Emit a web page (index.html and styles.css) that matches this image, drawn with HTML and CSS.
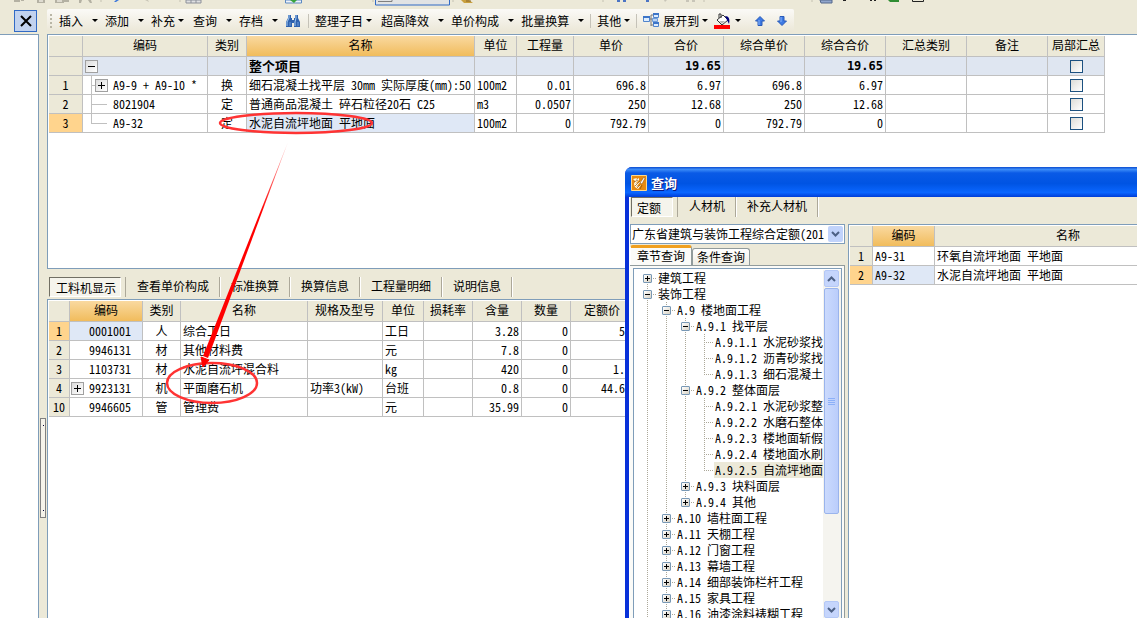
FILE: index.html
```html
<!DOCTYPE html>
<html lang="zh-CN">
<head>
<meta charset="utf-8">
<title>查询</title>
<link rel="stylesheet" href="styles.css">
</head>
<body>
<div class="topbar">
  <svg class="top-icons" width="960" height="9" viewBox="0 0 960 9" aria-hidden="true">
    <g fill="#b4b1a3"><path d="M14 0h6v2h-6zM21 0h3v1h-3z"/><path d="M37 0h8v3h-8zM55 0h9v3h-9zM60 0h9v2h-9z"/><path d="M79 0h3l-1 3h-2zM88 0h3l1 3h-2z"/></g>
    <g fill="#dedbd0"><path d="M39 0h4v2h-4zM57 0h5v2h-5z"/></g>
    <path d="M114 2l2-2h3l-3 2z" fill="#3c78dc"/><path d="M145 0h3l1 2z" fill="#c8c5b6"/>
    <path d="M101 0v2M180 0v2M373 0v2M453 0v2M603 0v2M704 0v2M812 0v2" stroke="#c4c1b2"/>
    <path d="M186 0v3h15v-3zM191 0v3M196 0v3" fill="#dfe0e2" stroke="#8c9099"/>
    <path d="M285.500 0v3h16v-3z" fill="#eef3fa" stroke="#5c8ac2"/><path d="M290 0h7l-3 3z" fill="#38a33c"/>
    <path d="M375.500 -1v6h74v-6z" fill="#e1e3e4" stroke="#316ac5"/><path d="M378 1.500h14v-3" fill="none" stroke="#7f7f7f"/>
    <path d="M461 0h8l4 3h-9z" fill="#c9a03e"/><path d="M466 1h5" stroke="#86652c"/>
    <path d="M617 0h3v2h-3zM623 0h3v2h-3zM646 0h3v2h-3z" fill="#4b74c4"/><path d="M664 0h3l-2 2zM686 0h3v2h-3zM692 0h3v2h-3z" fill="#c8c5b8"/>
    <path d="M820 0h12v3h-11z" fill="#91a6cc" stroke="#54688c"/><path d="M843 0h3v1h-3zM870 0h2v1h-2zM874 0h2v1h-2z" fill="#222"/>
    <path d="M888 0h11v2h-9z" fill="#2f8d32"/><path d="M912.500 0v1.500h11v-2" fill="none" stroke="#222"/>
  </svg>
</div>
<div class="workspace">
  <aside class="side">
    <div class="side-head"><button class="close" aria-label="关闭"><svg width="14" height="14" viewBox="0 0 14 14"><path d="M2 2l10 10M12 2L2 12" stroke="#000" stroke-width="2"/></svg></button></div>
    <div class="side-body"></div>
  </aside>
  <div class="gutter"><div class="grip"><i></i><i></i></div></div>
  <main class="main">
    <div class="toolbar-row">
      <div class="toolbar">
        <span class="handle"></span>
        <button class="menu wide">插入</button>
        <button class="menu wide">添加</button>
        <button class="menu">补充</button>
        <button class="menu wide">查询</button>
        <button class="menu wide">存档</button>
        <button class="icon" aria-label="查找"><svg width="16" height="14" viewBox="0 0 16 14"><path d="M3 1h3v3h1v2h2V4h1V1h3v3l2 4v5H9V9H7v4H1V8l2-4z" fill="#2f62ae"/><path d="M4 1v3L2 8v4M11 1v3l-1 4v4" stroke="#a9cdf2" fill="none"/><path d="M5 8v4M13 8v4" stroke="#6c9bd8"/></svg></button>
        <span class="sep"></span>
        <button class="menu">整理子目</button>
        <button class="menu wide">超高降效</button>
        <button class="menu wide">单价构成</button>
        <button class="menu wide end">批量换算</button>
        <span class="sep"></span>
        <button class="menu end">其他</button>
        <span class="sep"></span>
        <button class="menu end"><svg width="17" height="15" viewBox="0 0 17 15"><path d="M5 6h5M8 2v11M8 2h3M8 12h3" stroke="#777" fill="none"/><path d="M.5 3.500h6v5h-6zM10.500 .5h5v4h-5zM10.500 9.500h5v4h-5z" fill="#dcecff" stroke="#5084cc"/><path d="M0 3h7v2H0zM10 0h6v2h-6zM10 9h6v2h-6z" fill="#3d75c8"/><path d="M9.500 5.500h5v3h-5z" fill="#b9d3f4" stroke="#6d9bd9"/></svg>展开到</button>
        <button class="menu" aria-label="填充颜色"><svg width="18" height="16" viewBox="0 0 18 16"><path d="M7 5V1h-2v4M3 7l6-5 5 5-6 5z" fill="#fff" stroke="#333"/><path d="M5 8h6l-3 3z" fill="#b8b8b8"/><path d="M11 3c4 0 5 3 4 8l-2-4z" fill="#00007b"/><path d="M0 12h16v4H0z" fill="#f00"/></svg></button>
        <button class="icon small" aria-label="上移"><svg width="10" height="10" viewBox="0 0 10 10"><path d="M5 .5L9.500 5H7v4.500H3V5H.5z" fill="#3d79e4" stroke="#285ab8"/><path d="M4 4v5" stroke="#8ab8fa"/></svg></button>
        <button class="icon small" aria-label="下移"><svg width="10" height="10" viewBox="0 0 10 10"><path d="M5 9.500L9.500 5H7V.5H3V5H.5z" fill="#3d79e4" stroke="#285ab8"/><path d="M4 1v5" stroke="#8ab8fa"/></svg></button>
      </div>
    </div>
    <section class="pane upper">
      <table class="grid bill">
        <colgroup><col class="w34"><col class="w125"><col class="w39"><col class="w228"><col class="w42"><col class="w57"><col class="w75"><col class="w75"><col class="w81"><col class="w81"><col class="w81"><col class="w81"><col class="w57"></colgroup>
        <thead><tr><th></th><th>编码</th><th>类别</th><th class="on">名称</th><th>单位</th><th>工程量</th><th>单价</th><th>合价</th><th>综合单价</th><th>综合合价</th><th>汇总类别</th><th>备注</th><th>局部汇总</th></tr></thead>
        <tbody>
          <tr class="total"><td class="no"></td><td><div class="code root"><button class="box minus" aria-label="折叠"></button></div></td><td></td><td>整个项目</td><td></td><td></td><td></td><td class="r">19.65</td><td></td><td class="r">19.65</td><td></td><td></td><td class="c"><input type="checkbox" aria-label="局部汇总"></td></tr>
          <tr><td class="no">1</td><td><div class="code"><span class="guide has-box"><button class="box plus" aria-label="展开"></button></span>A9-9 + A9-10 *</div></td><td class="c">换</td><td>细石混凝土找平层 30mm 实际厚度(mm):50</td><td>100m2</td><td class="r">0.01</td><td class="r">696.8</td><td class="r">6.97</td><td class="r">696.8</td><td class="r">6.97</td><td></td><td></td><td class="c"><input type="checkbox" aria-label="局部汇总 1"></td></tr>
          <tr><td class="no">2</td><td><div class="code"><span class="guide"></span>8021904</div></td><td class="c">定</td><td>普通商品混凝土 碎石粒径20石 C25</td><td>m3</td><td class="r">0.0507</td><td class="r">250</td><td class="r">12.68</td><td class="r">250</td><td class="r">12.68</td><td></td><td></td><td class="c"><input type="checkbox" aria-label="局部汇总 2"></td></tr>
          <tr><td class="no on">3</td><td><div class="code"><span class="guide end"></span>A9-32</div></td><td class="c">定</td><td class="sel">水泥自流坪地面 平地面</td><td>100m2</td><td class="r">0</td><td class="r">792.79</td><td class="r">0</td><td class="r">792.79</td><td class="r">0</td><td></td><td></td><td class="c"><input type="checkbox" aria-label="局部汇总 3"></td></tr>
        </tbody>
      </table>
    </section>
    <nav class="tabs">
      <button class="tab active">工料机显示</button><button class="tab">查看单价构成</button><button class="tab">标准换算</button><button class="tab">换算信息</button><button class="tab">工程量明细</button><button class="tab">说明信息</button>
    </nav>
    <section class="pane lower">
      <table class="grid parts">
        <colgroup><col class="w21"><col class="w73"><col class="w38"><col class="w127"><col class="w75"><col class="w41"><col class="w49"><col class="w49"><col class="w49"><col class="w63"></colgroup>
        <thead><tr><th></th><th class="on">编码</th><th>类别</th><th>名称</th><th>规格及型号</th><th>单位</th><th>损耗率</th><th>含量</th><th>数量</th><th>定额价</th></tr></thead>
        <tbody>
          <tr><td class="no on">1</td><td class="sel"><div class="num">0001001</div></td><td class="c">人</td><td>综合工日</td><td></td><td>工日</td><td></td><td class="r">3.28</td><td class="r">0</td><td class="r">51</td></tr>
          <tr><td class="no">2</td><td><div class="num">9946131</div></td><td class="c">材</td><td>其他材料费</td><td></td><td>元</td><td></td><td class="r">7.8</td><td class="r">0</td><td class="r">1</td></tr>
          <tr><td class="no">3</td><td><div class="num">1103731</div></td><td class="c">材</td><td>水泥自流坪混合料</td><td></td><td>kg</td><td></td><td class="r">420</td><td class="r">0</td><td class="r">1.5</td></tr>
          <tr><td class="no">4</td><td><div class="num"><button class="box plus" aria-label="展开"></button>9923131</div></td><td class="c">机</td><td>平面磨石机</td><td>功率3(kW)</td><td>台班</td><td></td><td class="r">0.8</td><td class="r">0</td><td class="r">44.62</td></tr>
          <tr><td class="no">10</td><td><div class="num">9946605</div></td><td class="c">管</td><td>管理费</td><td></td><td>元</td><td></td><td class="r">35.99</td><td class="r">0</td><td class="r">1</td></tr>
        </tbody>
      </table>
    </section>
  </main>
</div>

<svg class="marks" width="400" height="420" viewBox="0 0 400 420" aria-hidden="true">
  <defs><linearGradient id="fade" gradientUnits="userSpaceOnUse" x1="288" y1="142" x2="262" y2="212"><stop offset="0" stop-color="#f00" stop-opacity=".25"/><stop offset="1" stop-color="#f00"/></linearGradient></defs>
  <ellipse cx="296" cy="123" rx="76" ry="10" fill="none" stroke="#f33" stroke-width="2.500"/>
  <ellipse cx="212" cy="383" rx="45" ry="20" fill="none" stroke="#f33" stroke-width="2.500"/>
  <path d="M288 142L208 358L203 356Z" fill="url(#fade)"/>
  <path d="M201 357L209 360L203 367Z" fill="#f00" stroke="#f00"/>
</svg>

<div class="dialog" role="dialog" aria-label="查询">
  <div class="title"><svg width="16" height="16" viewBox="0 0 16 16"><path d="M.5.5h15v15H.5z" fill="#e88a10" stroke="#ffd88a"/><path d="M2 4l4-1-1 2 3-2v2L4 9l6-3-5 6 5-2-3 4-3-2-1-3 1-3z" fill="#fffbe8"/><path d="M13 2L9 8l2 1 3-6z" fill="#fff" stroke="#8a4a00" stroke-width=".5"/><path d="M3 7l4-2M4 11l5-5M9 10l-3 3M11 10l-2 4" stroke="#8a4a00" stroke-width=".7"/></svg><span>查询</span></div>
  <div class="dialog-body">
    <nav class="tabs dtabs"><button class="tab active">定额</button><button class="tab">人材机</button><button class="tab">补充人材机</button></nav>
    <div class="split">
      <div class="left">
        <div class="combo"><select aria-label="定额库"><option>广东省建筑与装饰工程综合定额(201</option></select><span class="arrow"><svg width="9" height="6" viewBox="0 0 9 6"><path d="M1 1l3.500 3.500L8 1" fill="none" stroke="#4d6185" stroke-width="2"/></svg></span></div>
        <div class="xptabs"><button class="xp active">章节查询</button><button class="xp">条件查询</button></div>
        <div class="page">
          <div class="treebox">
            <div class="tree">
              <div class="row"><i class="n first"><button class="pm p" aria-label="展开"></button></i><span>建筑工程</span></div>
              <div class="row"><i class="n"><button class="pm" aria-label="折叠"></button></i><span>装饰工程</span></div>
              <div class="row"><i class="v"></i><i class="n"><button class="pm" aria-label="折叠"></button></i><span>A.9 楼地面工程</span></div>
              <div class="row"><i class="v"></i><i class="v"></i><i class="n"><button class="pm" aria-label="折叠"></button></i><span>A.9.1 找平层</span></div>
              <div class="row"><i class="v"></i><i class="v"></i><i class="v"></i><i class="n"></i><span>A.9.1.1 水泥砂浆找</span></div>
              <div class="row"><i class="v"></i><i class="v"></i><i class="v"></i><i class="n"></i><span>A.9.1.2 沥青砂浆找</span></div>
              <div class="row"><i class="v"></i><i class="v"></i><i class="v"></i><i class="n last"></i><span>A.9.1.3 细石混凝土</span></div>
              <div class="row"><i class="v"></i><i class="v"></i><i class="n"><button class="pm" aria-label="折叠"></button></i><span>A.9.2 整体面层</span></div>
              <div class="row"><i class="v"></i><i class="v"></i><i class="v"></i><i class="n"></i><span>A.9.2.1 水泥砂浆整</span></div>
              <div class="row"><i class="v"></i><i class="v"></i><i class="v"></i><i class="n"></i><span>A.9.2.2 水磨石整体</span></div>
              <div class="row"><i class="v"></i><i class="v"></i><i class="v"></i><i class="n"></i><span>A.9.2.3 楼地面斩假</span></div>
              <div class="row"><i class="v"></i><i class="v"></i><i class="v"></i><i class="n"></i><span>A.9.2.4 楼地面水刷</span></div>
              <div class="row"><i class="v"></i><i class="v"></i><i class="v"></i><i class="n last"></i><span class="picked">A.9.2.5 自流坪地面</span></div>
              <div class="row"><i class="v"></i><i class="v"></i><i class="n"><button class="pm p" aria-label="展开"></button></i><span>A.9.3 块料面层</span></div>
              <div class="row"><i class="v"></i><i class="v"></i><i class="n last"><button class="pm p" aria-label="展开"></button></i><span>A.9.4 其他</span></div>
              <div class="row"><i class="v"></i><i class="n"><button class="pm p" aria-label="展开"></button></i><span>A.10 墙柱面工程</span></div>
              <div class="row"><i class="v"></i><i class="n"><button class="pm p" aria-label="展开"></button></i><span>A.11 天棚工程</span></div>
              <div class="row"><i class="v"></i><i class="n"><button class="pm p" aria-label="展开"></button></i><span>A.12 门窗工程</span></div>
              <div class="row"><i class="v"></i><i class="n"><button class="pm p" aria-label="展开"></button></i><span>A.13 幕墙工程</span></div>
              <div class="row"><i class="v"></i><i class="n"><button class="pm p" aria-label="展开"></button></i><span>A.14 细部装饰栏杆工程</span></div>
              <div class="row"><i class="v"></i><i class="n"><button class="pm p" aria-label="展开"></button></i><span>A.15 家具工程</span></div>
              <div class="row"><i class="v"></i><i class="n"><button class="pm p" aria-label="展开"></button></i><span>A.16 油漆涂料裱糊工程</span></div>
            </div>
            <div class="scroll">
              <button class="sbtn" aria-label="向上滚动"><svg width="9" height="6" viewBox="0 0 9 6"><path d="M1 5l3.500-3.500L8 5" fill="none" stroke="#4d6185" stroke-width="2"/></svg></button>
              <div class="thumb"><i></i><i></i><i></i><i></i></div>
              <button class="sbtn bottom" aria-label="向下滚动"><svg width="9" height="6" viewBox="0 0 9 6"><path d="M1 1l3.500 3.500L8 1" fill="none" stroke="#4d6185" stroke-width="2"/></svg></button>
            </div>
          </div>
        </div>
      </div>
      <div class="pane right">
        <table class="grid result">
          <colgroup><col class="w23"><col class="w62"><col class="w267"></colgroup>
          <thead><tr><th></th><th class="on">编码</th><th>名称</th></tr></thead>
          <tbody>
            <tr><td class="no">1</td><td>A9-31</td><td>环氧自流坪地面 平地面</td></tr>
            <tr><td class="no on">2</td><td class="sel">A9-32</td><td>水泥自流坪地面 平地面</td></tr>
          </tbody>
        </table>
      </div>
    </div>
  </div>
</div>
</body>
</html>
```
FILE: styles.css
```css
* { box-sizing: border-box; }
html, body { height: 100%; }
body {
  margin: 0; display: flex; flex-direction: column; overflow: hidden; position: relative;
  background: #ece9d8; color: #000;
  font: 12px/16px "Noto Sans Mono CJK SC", "Noto Sans CJK SC", monospace;
}
button, select, input { font: inherit; color: inherit; margin: 0; padding: 0; }
button { border: 0; background: none; white-space: nowrap; }
svg { display: block; flex: none; }
i { font-style: normal; }

.topbar { height: 9px; flex: none; overflow: hidden; }
.workspace { flex: 1; display: flex; min-height: 0; }

.side { width: 39px; flex: none; display: flex; flex-direction: column; }
.side-head { height: 25px; flex: none; display: flex; justify-content: flex-end; padding: 1px 2px 0 0; }
.close { width: 23px; height: 22px; border: 1px solid #316ac5; background: #c1d2ee; display: flex; align-items: center; justify-content: center; }
.side-body { flex: 1; background: #fff; border-top: 1px solid #7f9db9; border-right: 1px solid #7f9db9; }

.gutter { width: 8px; flex: none; display: flex; justify-content: center; align-items: flex-start; padding-top: 409px; }
.grip { width: 6px; height: 100px; border: 1px solid #808080; background: #f5f3ea; display: flex; flex-direction: column; justify-content: space-between; align-items: center; padding: 6px 0; }
.grip i { width: 1px; height: 1px; background: #003; }

.main { flex: 1; min-width: 0; display: flex; flex-direction: column; }
.toolbar-row { height: 25px; flex: none; display: flex; }
.toolbar { display: flex; align-items: center; height: 23px; padding-left: 3px; background: linear-gradient(#fbfaf7, #ebe7d7); border-radius: 2px; }
.handle { width: 2px; height: 14px; margin-right: 7px; background: repeating-linear-gradient(#b9b6a6 0 2px, transparent 2px 4px); }
.menu { display: flex; align-items: center; gap: 3px; margin-right: 9px; }
.menu::after { content: ""; border: 3px solid transparent; border-top-color: #000; border-bottom: 0; }
.menu.wide { margin-right: 7px; }
.menu.wide::after { margin-left: 6px; }
.menu.end { margin-right: 6px; }
.icon { margin-right: 7px; }
.icon.small { margin: 0 7px 0 5px; }
.sep { width: 1px; height: 14px; background: #c5c2b8; margin-right: 6px; }

.pane { background: #fff; border: 1px solid #7f9db9; border-right: 0; padding: 1px 0 0 1px; overflow: hidden; }
.upper { height: 235px; flex: none; }
.lower { flex: 1; border-bottom: 0; }

.grid { border-collapse: separate; border-spacing: 0; table-layout: fixed; width: 0; }
.grid th, .grid td { border-right: 1px solid #c0c0c0; border-bottom: 1px solid #c0c0c0; padding: 0 2px; height: 19px; line-height: 18px; white-space: nowrap; overflow: hidden; text-align: left; font-weight: normal; vertical-align: top; }
.grid th { height: 21px; background: #ece9d8; text-align: center; }
.grid th.on { background: linear-gradient(#f9d9a0, #f1bc5c); }
.grid td.no { background: #ece9d8; text-align: center; padding: 0; }
.grid td.no.on { background: #ffd48d; }
.grid td.sel { background: #dfe8f6; }
.grid td.c { text-align: center; padding: 0; }
.grid td.r { text-align: right; }
.grid .total td { background: #dfe6f1; font-weight: bold; font-size: 13px; }
.grid .total td.r { font-size: 12px; font-family: "DejaVu Sans Mono", monospace; }
.grid .total td.no { background: #ece9d8; }
.w34 { width: 34px; } .w125 { width: 125px; } .w39 { width: 39px; } .w228 { width: 228px; }
.w42 { width: 42px; } .w57 { width: 57px; } .w75 { width: 75px; } .w81 { width: 81px; }
.w21 { width: 21px; } .w73 { width: 73px; } .w38 { width: 38px; } .w127 { width: 127px; }
.w41 { width: 41px; } .w49 { width: 49px; } .w63 { width: 63px; }
.w23 { width: 23px; } .w62 { width: 62px; } .w267 { width: 267px; }

.code { display: flex; align-items: center; height: 18px; padding-left: 6px; }
.code.root { padding-left: 0; }
.guide { width: 18px; height: 18px; margin-right: 4px; flex: none; display: flex; align-items: center;
  background: linear-gradient(#c0c0c0, #c0c0c0) 0 0 / 1px 18px no-repeat, linear-gradient(#c0c0c0, #c0c0c0) 0 9px / 16px 1px no-repeat; }
.guide.end { background: linear-gradient(#c0c0c0, #c0c0c0) 0 0 / 1px 9px no-repeat, linear-gradient(#c0c0c0, #c0c0c0) 0 9px / 16px 1px no-repeat; }
.guide.has-box { padding-left: 4px; }
.box { width: 13px; height: 13px; flex: none; border: 1px solid #a0a0a0; background: linear-gradient(#000, #000) center / 7px 1px no-repeat, linear-gradient(135deg, #dcdcdc, #fff); }
.box.plus { background: linear-gradient(#000, #000) center / 7px 1px no-repeat, linear-gradient(#000, #000) center / 1px 7px no-repeat, linear-gradient(135deg, #dcdcdc, #fff); }
.num { display: flex; align-items: center; justify-content: flex-end; gap: 5px; height: 18px; padding-right: 9px; }

input[type="checkbox"] { appearance: none; display: block; width: 13px; height: 13px; margin: 3px auto 0; border: 1px solid #1c5180; background: linear-gradient(135deg, #dcdcd7, #fff); }

.tabs { height: 30px; flex: none; display: flex; align-items: flex-start; padding: 8px 0 0 2px; }
.tab { height: 20px; padding: 0 10px 2px 11px; border-right: 1px solid #aca899; box-shadow: 1px 0 #fff; }
.tab.active { padding: 2px 4px 0 6px; border: 1px solid #fff; border-top-color: #716f64; border-left-color: #716f64; margin-right: 5px; background: #f5f4ec; box-shadow: 4px 0 #ece9d8, 5px 0 #aca899; }

.marks { position: absolute; left: 0; top: 0; }

.dialog { position: absolute; left: 625px; right: 0; top: 167px; bottom: 0; display: flex; flex-direction: column; border-radius: 7px 0 0 0; overflow: hidden; background: #0831d9; }
.title { height: 30px; flex: none; display: flex; align-items: center; gap: 4px; padding: 2px 0 0 6px; color: #fff; font-weight: bold; font-size: 13px; text-shadow: 1px 1px #0a1883;
  background: linear-gradient(#0a4bd0, #3c8cf8 8%, #0a5ae6 20%, #0054e3 55%, #0a66ff 85%, #003dd7); }
.dialog-body { flex: 1; min-height: 0; display: flex; flex-direction: column; margin-left: 4px; background: #ece9d8; border-left: 1px solid #fff; }
.dtabs { height: 27px; padding: 0 0 0 1px; }
.dtabs .tab.active { padding: 2px 11px 0 5px; }
.split { flex: 1; min-height: 0; display: flex; gap: 3px; }
.left { width: 215px; flex: none; display: flex; flex-direction: column; }
.combo { height: 20px; flex: none; position: relative; }
.combo select { appearance: none; width: 100%; height: 20px; border: 1px solid #7f9db9; border-radius: 0; background: #fff; padding: 0 17px 0 1px; display: block; }
.arrow { position: absolute; right: 2px; top: 2px; width: 15px; height: 16px; border-radius: 2px; background: #c1d3fb; display: flex; align-items: center; justify-content: center; pointer-events: none; }
.xptabs { height: 20px; margin-top: 1px; flex: none; display: flex; align-items: flex-end; }
.xp { height: 17px; padding: 0 4px; border: 1px solid #919b9c; border-bottom: 0; border-radius: 3px 3px 0 0; background: linear-gradient(#fff, #f0eee4); }
.xp.active { height: 20px; padding: 0 6px 2px; border-top: 3px solid #f0a020; border-left-color: #fff; background: #fbfbf8; }
.page { flex: 1; min-height: 0; display: flex; border: solid #919b9c; border-width: 1px 1px 0 0; background: #fbfbf8; padding: 2px 2px 0 3px; }
.treebox { flex: 1; min-width: 0; display: flex; border: solid #7f9db9; border-width: 1px 1px 0 1px; background: #fff; padding-top: 1px; }
.tree { flex: 1; min-width: 0; overflow: hidden; padding-left: 4px; }
.row { display: flex; height: 16px; line-height: 16px; white-space: nowrap; }
.row > i { width: 19px; height: 16px; flex: none; display: flex; align-items: center; justify-content: center; }
.row > .v { background: repeating-linear-gradient(#aca899 0 1px, transparent 1px 2px) 9px 0 / 1px 16px no-repeat; }
.row > .n { background: repeating-linear-gradient(#aca899 0 1px, transparent 1px 2px) 9px 0 / 1px 16px no-repeat, repeating-linear-gradient(90deg, #aca899 0 1px, transparent 1px 2px) 9px 8px / 10px 1px no-repeat; }
.row > .last { background: repeating-linear-gradient(#aca899 0 1px, transparent 1px 2px) 9px 0 / 1px 8px no-repeat, repeating-linear-gradient(90deg, #aca899 0 1px, transparent 1px 2px) 9px 8px / 10px 1px no-repeat; }
.row > .first { background: repeating-linear-gradient(#aca899 0 1px, transparent 1px 2px) 9px 8px / 1px 8px no-repeat, repeating-linear-gradient(90deg, #aca899 0 1px, transparent 1px 2px) 9px 8px / 10px 1px no-repeat; }
.row > span { padding-left: 1px; }
.row > .picked { flex: 1; background: #ece9d8; }
.pm { width: 9px; height: 9px; border: 1px solid #7898b5; border-radius: 1px; background: linear-gradient(#000, #000) center / 5px 1px no-repeat, linear-gradient(135deg, #fff, #d8d2c4); }
.pm.p { background: linear-gradient(#000, #000) center / 5px 1px no-repeat, linear-gradient(#000, #000) center / 1px 5px no-repeat, linear-gradient(135deg, #fff, #d8d2c4); }
.scroll { width: 18px; flex: none; display: flex; flex-direction: column; background: #f5f4ef; padding: 0 2px 0 1px; }
.sbtn { height: 17px; flex: none; border: 1px solid #b4c8f6; border-radius: 2px; background: #c5d5fc; display: flex; align-items: center; justify-content: center; }
.sbtn.bottom { margin: auto 0 0; }
.thumb { height: 226px; margin-top: 1px; border: 1px solid #9ab4ec; border-radius: 2px; background: linear-gradient(90deg, #cbdafd, #bacdfb); display: flex; flex-direction: column; align-items: center; justify-content: center; gap: 1px; }
.thumb i { width: 7px; height: 1px; background: #8cb0f8; }
.right { flex: 1; min-width: 0; border-bottom: 0; }
```
